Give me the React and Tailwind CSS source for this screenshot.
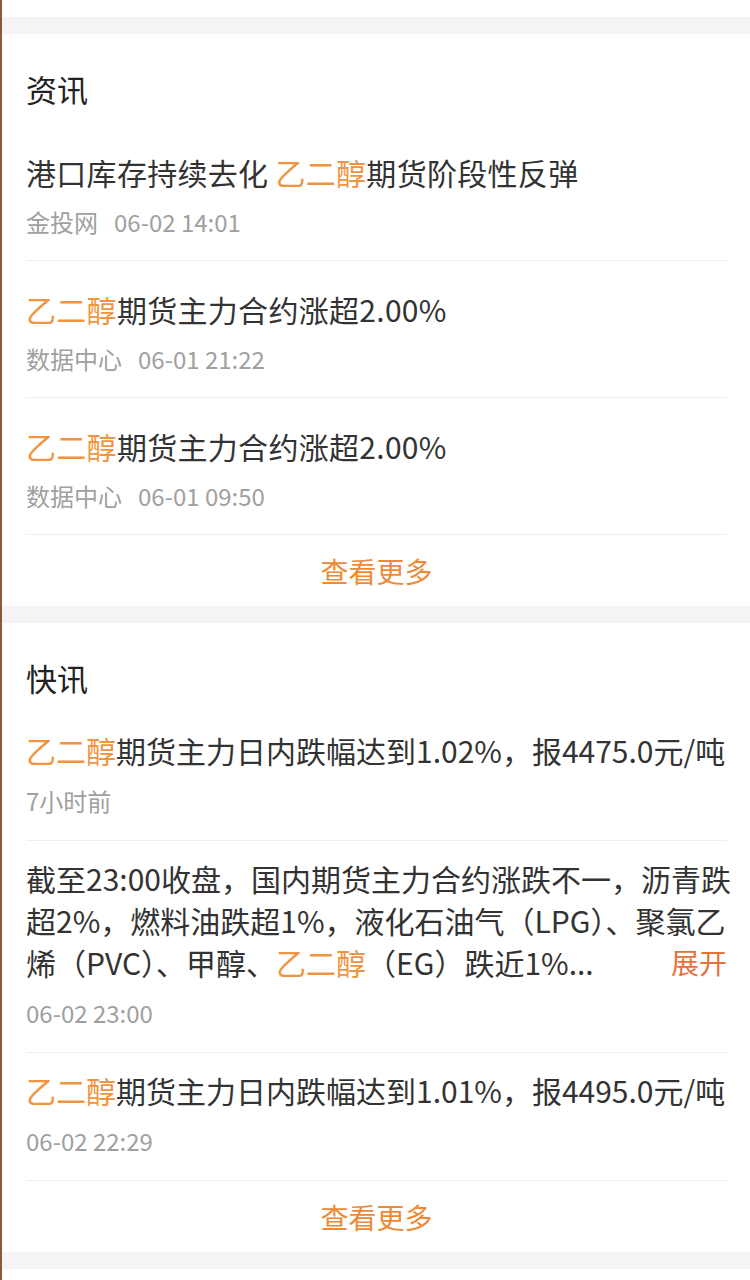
import React from "react";

const ORANGE = "text-[#f0953f]";

const newsItems = [
  { pre: "港口库存持续去化 ", hl: "乙二醇", post: "期货阶段性反弹", source: "金投网", time: "06-02 14:01" },
  { pre: "", hl: "乙二醇", post: "期货主力合约涨超2.00%", source: "数据中心", time: "06-01 21:22" },
  { pre: "", hl: "乙二醇", post: "期货主力合约涨超2.00%", source: "数据中心", time: "06-01 09:50" },
];

function Band() {
  return <div className="h-[17px] bg-[#f4f4f4]" />;
}

function SectionTitle({ children }) {
  return (
    <div className="pt-[33px] pb-[13px] text-[31px] leading-[44px] text-[#222222]">
      {children}
    </div>
  );
}

function MoreLink() {
  return (
    <div className="flex h-[71px] items-center justify-center text-[28px] text-[#ef8a34]">
      查看更多
    </div>
  );
}

function Meta({ children }) {
  return (
    <div className="flex text-[24px] leading-[34px] text-[#a0a0a0]">{children}</div>
  );
}

function NewsItem({ item }) {
  return (
    <div className="border-b border-[#eeeeee] pt-[27px] pb-[21px]">
      <div className="whitespace-nowrap text-[30px] leading-[42px] tracking-[0.3px] text-[#333333]">
        {item.pre}
        <span className={ORANGE}>{item.hl}</span>
        {item.post}
      </div>
      <div className="mt-[12px]">
        <Meta>
          <span>{item.source}</span>
          <span className="ml-[16px]">{item.time}</span>
        </Meta>
      </div>
    </div>
  );
}

function FlashItem({ children, time }) {
  return (
    <div className="border-b border-[#eeeeee] pt-[16px] pb-[22px]">
      <div className="text-[30px] leading-[42px] text-[#333333]">{children}</div>
      <div className="mt-[13px]">
        <Meta>{time}</Meta>
      </div>
    </div>
  );
}

export default function App() {
  return (
    <div
      className="min-h-[1280px] border-l-2 border-[#8b5a3c] bg-white"
      style={{ fontFamily: '"Noto Sans CJK SC", "Noto Sans", sans-serif' }}
    >
      <div className="h-[17px]" />
      <Band />

      <section className="pl-[24px] pr-[23px]">
        <SectionTitle>资讯</SectionTitle>
        {newsItems.map((item, i) => (
          <NewsItem key={i} item={item} />
        ))}
        <MoreLink />
      </section>

      <Band />

      <section className="pl-[24px] pr-[23px]">
        <SectionTitle>快讯</SectionTitle>

        <FlashItem time="7小时前">
          <div className="whitespace-nowrap">
            <span className={ORANGE}>乙二醇</span>期货主力日内跌幅达到1.02%，报4475.0元/吨
          </div>
        </FlashItem>

        <FlashItem time="06-02 23:00">
          <div className="whitespace-nowrap">截至23:00收盘，国内期货主力合约涨跌不一，沥青跌</div>
          <div className="whitespace-nowrap">超2%，燃料油跌超1%，液化石油气（LPG）、聚氯乙</div>
          <div className="flex justify-between whitespace-nowrap">
            <span>
              烯（PVC）、甲醇、<span className={ORANGE}>乙二醇</span>（EG）跌近1%...
            </span>
            <span className="text-[28px] text-[#e8703a]">展开</span>
          </div>
        </FlashItem>

        <FlashItem time="06-02 22:29">
          <div className="whitespace-nowrap">
            <span className={ORANGE}>乙二醇</span>期货主力日内跌幅达到1.01%，报4495.0元/吨
          </div>
        </FlashItem>

        <MoreLink />
      </section>

      <Band />
    </div>
  );
}
